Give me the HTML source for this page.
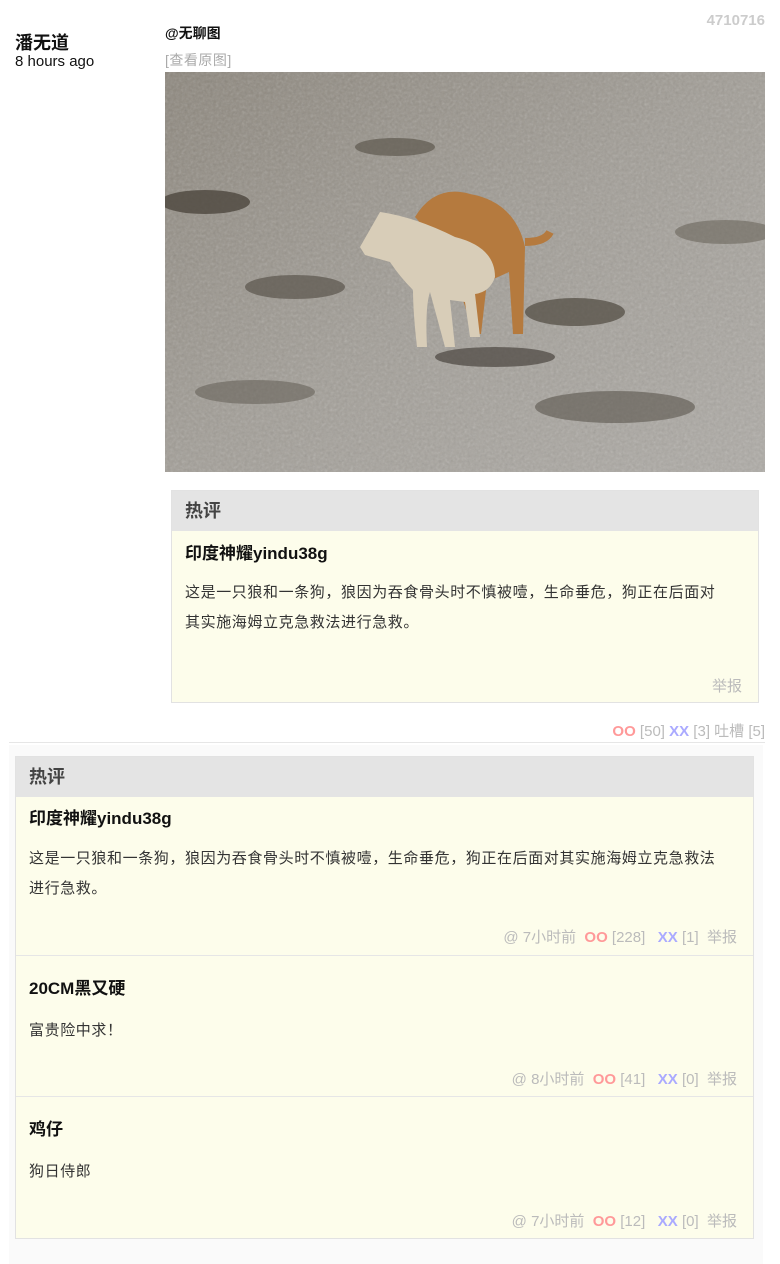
<!DOCTYPE html>
<html><head><meta charset="utf-8"><style>
*{margin:0;padding:0;box-sizing:border-box}
body{width:780px;height:1264px;background:#fff;font-family:"Liberation Sans","Noto Sans CJK SC",sans-serif;position:relative;overflow:hidden;color:#111}
.a{position:absolute;white-space:nowrap}
.box{position:absolute;border:1px solid #e2e2e2;background:#fdfdeb}
.hd{position:absolute;left:0;right:0;top:0;height:40px;background:#e4e4e4;color:#444;font-weight:bold;font-size:18px;line-height:40px;padding-left:13px}
.au{position:absolute;left:13px;font-weight:bold;font-size:17px}
.tx{position:absolute;left:13px;font-size:15px;letter-spacing:0.6px;line-height:30px;color:#333;white-space:normal}
.ft{position:absolute;right:12px;font-size:15px;color:#bbb;white-space:nowrap}
.oo{color:#f99;font-weight:bold}.xx{color:#aaf;font-weight:bold}
.sep{position:absolute;left:0;right:0;height:1px;background:#e6e6e6}
</style></head><body>
<div class="a" style="right:15px;top:12px;font-size:15px;color:#ccc;font-weight:bold">4710716</div>
<div class="a" style="left:15px;top:29px;font-size:18px;font-weight:bold">潘无道</div>
<div class="a" style="left:15px;top:53px;font-size:15px">8 hours ago</div>
<div class="a" style="left:165px;top:23px;font-size:14px;font-weight:bold">@无聊图</div>
<div class="a" style="left:165px;top:50px;font-size:14px;color:#aaa;letter-spacing:0.5px">[查看原图]</div>
<svg class="a" style="left:165px;top:72px" width="600" height="400" viewBox="0 0 600 400">
<defs><linearGradient id="g" x1="0" y1="0" x2="1" y2="1"><stop offset="0" stop-color="#8c867c"/><stop offset=".5" stop-color="#a29e97"/><stop offset="1" stop-color="#aeaba6"/></linearGradient>
<filter id="n"><feTurbulence type="fractalNoise" baseFrequency="0.35" numOctaves="2" result="t"/><feColorMatrix type="saturate" values="0"/><feComponentTransfer><feFuncA type="linear" slope="0.5"/></feComponentTransfer></filter></defs>
<rect width="600" height="400" fill="url(#g)"/>
<rect width="600" height="400" filter="url(#n)" opacity=".6"/>
<ellipse cx="40" cy="130" rx="45" ry="12" fill="#4c463d" opacity=".8"/>
<ellipse cx="130" cy="215" rx="50" ry="12" fill="#5a544b" opacity=".7"/>
<ellipse cx="230" cy="75" rx="40" ry="9" fill="#5e584e" opacity=".7"/>
<ellipse cx="410" cy="240" rx="50" ry="14" fill="#4e483f" opacity=".7"/>
<ellipse cx="560" cy="160" rx="50" ry="12" fill="#6a655c" opacity=".6"/>
<ellipse cx="450" cy="335" rx="80" ry="16" fill="#5a554d" opacity=".6"/>
<ellipse cx="90" cy="320" rx="60" ry="12" fill="#67625a" opacity=".6"/>
<ellipse cx="330" cy="285" rx="60" ry="10" fill="#4a453e" opacity=".7"/>
<path d="M250 145 Q270 112 305 122 Q350 130 360 175 L358 262 L348 262 L344 200 L322 210 L316 262 L306 262 Q300 220 285 210 Q265 160 250 145Z" fill="#b57a3e"/>
<path d="M360 170 Q380 170 385 160" stroke="#b57a3e" stroke-width="8" fill="none"/>
<path d="M195 175 L215 140 Q250 145 290 165 Q330 175 330 205 Q325 220 310 222 L315 265 L305 265 L300 230 L285 228 L290 275 L280 275 L265 220 Q260 235 262 275 L252 275 Q248 240 248 218 Q235 205 225 190 L200 183Z" fill="#d8cdb8"/>
</svg>
<div class="box" style="left:171px;top:490px;width:588px;height:213px">
<div class="hd">热评</div>
<div class="au" style="top:48px">印度神耀yindu38g</div>
<div class="tx" style="top:87px;width:545px">这是一只狼和一条狗，狼因为吞食骨头时不慎被噎，生命垂危，狗正在后面对其实施海姆立克急救法进行急救。</div>
<div class="ft" style="top:184px;right:16px">举报</div>
</div>
<div class="a" style="right:15px;top:720px;font-size:15px;color:#bbb"><span class="oo">OO</span> [50] <span class="xx">XX</span> [3] 吐槽 [5]</div>
<div class="a" style="left:9px;top:742px;width:756px;height:1px;background:#e6e6e6"></div>
<div class="a" style="left:9px;top:745px;width:754px;height:519px;background:#fafafa"></div>
<div class="box" style="left:15px;top:756px;width:739px;height:483px">
<div class="hd">热评</div>
<div class="au" style="top:47px">印度神耀yindu38g</div>
<div class="tx" style="top:87px;width:696px">这是一只狼和一条狗，狼因为吞食骨头时不慎被噎，生命垂危，狗正在后面对其实施海姆立克急救法进行急救。</div>
<div class="ft" style="top:169px;right:16px">@ 7小时前 &nbsp;<span class="oo">OO</span> [228] &nbsp; <span class="xx">XX</span> [1] &nbsp;举报</div>
<div class="sep" style="top:198px"></div>
<div class="au" style="top:217px">20CM黑又硬</div>
<div class="tx" style="top:259px">富贵险中求！</div>
<div class="ft" style="top:311px;right:16px">@ 8小时前 &nbsp;<span class="oo">OO</span> [41] &nbsp; <span class="xx">XX</span> [0] &nbsp;举报</div>
<div class="sep" style="top:339px"></div>
<div class="au" style="top:358px">鸡仔</div>
<div class="tx" style="top:400px">狗日侍郎</div>
<div class="ft" style="top:453px;right:16px">@ 7小时前 &nbsp;<span class="oo">OO</span> [12] &nbsp; <span class="xx">XX</span> [0] &nbsp;举报</div>
</div>
</body></html>
